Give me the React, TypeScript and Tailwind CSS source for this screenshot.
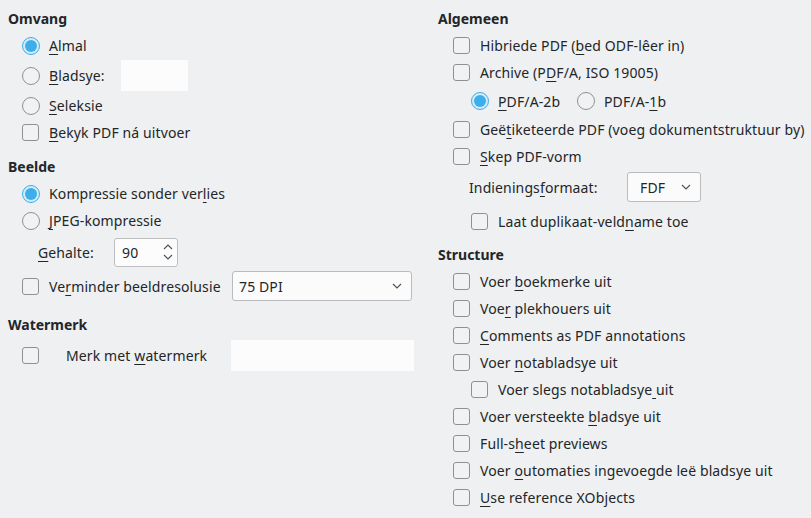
import React from "react";

const M = ({ t, i }: { t: string; i?: number }) => {
  if (i === undefined || i < 0) return <>{t}</>;
  return (
    <>
      {t.slice(0, i)}
      <span className="underline decoration-1 underline-offset-[3px]">{t[i]}</span>
      {t.slice(i + 1)}
    </>
  );
};

const Check = () => (
  <span className="block w-[17px] h-[17px] rounded-[3px] border border-[#8e9194] bg-[#f1f2f3]" />
);

const Radio = ({ on }: { on?: boolean }) =>
  on ? (
    <span className="flex items-center justify-center w-[18px] h-[18px] rounded-full border border-[#3daee9] bg-[#d4ebf8]">
      <span className="block w-[12px] h-[12px] rounded-full bg-[#3daee9]" />
    </span>
  ) : (
    <span className="block w-[18px] h-[18px] rounded-full border border-[#8e9194] bg-[#f1f2f3]" />
  );

const Row = ({
  children,
  h = 27,
  ml = 0,
}: {
  children: React.ReactNode;
  h?: number;
  ml?: number;
}) => (
  <div className="flex items-center whitespace-nowrap" style={{ height: h, marginLeft: ml }}>
    {children}
  </div>
);

const Ind = ({ children }: { children: React.ReactNode }) => (
  <span className="flex w-[27px] shrink-0 items-center">{children}</span>
);

const Header = ({ children }: { children: React.ReactNode }) => (
  <div className="flex h-[27px] items-center font-bold tracking-normal">{children}</div>
);

const ChevDown = () => (
  <svg width="10" height="6" viewBox="0 0 10 6" fill="none">
    <path d="M1 1l4 4 4-4" stroke="#4d4f52" strokeWidth="1.1" />
  </svg>
);

const ChevUp = () => (
  <svg width="10" height="6" viewBox="0 0 10 6" fill="none">
    <path d="M1 5l4-4 4 4" stroke="#4d4f52" strokeWidth="1.1" />
  </svg>
);

const CB = ({ t, i, ml = 0 }: { t: string; i?: number; ml?: number }) => (
  <Row ml={ml}>
    <Ind>
      <Check />
    </Ind>
    <span>
      <M t={t} i={i} />
    </span>
  </Row>
);

export default function App() {
  return (
    <div
      className="w-[811px] h-[518px] bg-[#eff0f1] text-[#232629] text-[14px] tracking-[0.12px] flex overflow-hidden"
      style={{ fontFamily: '"Noto Sans", "Open Sans", sans-serif' }}
    >
      {/* Left column */}
      <div className="w-[430px] pl-[8px] pt-[5px] flex flex-col">
        <Header>Omvang</Header>
        <Row ml={14}>
          <Ind>
            <Radio on />
          </Ind>
          <span>
            <M t="Almal" i={0} />
          </span>
        </Row>
        <Row ml={14} h={33}>
          <Ind>
            <Radio />
          </Ind>
          <span className="w-[72px] shrink-0">
            <M t="Bladsye:" i={0} />
          </span>
          <span className="block w-[67px] h-[31px] bg-[#fcfcfc]" />
        </Row>
        <Row ml={14}>
          <Ind>
            <Radio />
          </Ind>
          <span>
            <M t="Seleksie" i={0} />
          </span>
        </Row>
        <CB ml={14} t="Bekyk PDF ná uitvoer" i={0} />

        <div className="mt-[7px]">
          <Header>Beelde</Header>
        </div>
        <Row ml={14}>
          <Ind>
            <Radio on />
          </Ind>
          <span>
            <M t="Kompressie sonder verlies" i={21} />
          </span>
        </Row>
        <Row ml={14}>
          <Ind>
            <Radio />
          </Ind>
          <span>
            <M t="JPEG-kompressie" i={0} />
          </span>
        </Row>
        <Row ml={30} h={36}>
          <span className="w-[76px] shrink-0">
            <M t="Gehalte:" i={0} />
          </span>
          <span className="flex items-center w-[64px] h-[29px] rounded-[3px] border border-[#bcbec0] bg-[#fcfcfc] pl-[7px] pr-[4px]">
            <span className="flex-1">90</span>
            <span className="flex flex-col gap-[4px]">
              <ChevUp />
              <ChevDown />
            </span>
          </span>
        </Row>
        <Row ml={14} h={32}>
          <Ind>
            <Check />
          </Ind>
          <span className="w-[183px] shrink-0">
            <M t="Verminder beeldresolusie" i={2} />
          </span>
          <span className="flex items-center w-[180px] h-[30px] rounded-[3px] border border-[#b9bbbe] bg-[#fbfbfb] pl-[6px] pr-[9px]">
            <span className="flex-1">75 DPI</span>
            <ChevDown />
          </span>
        </Row>

        <div className="mt-[9px]">
          <Header>Watermerk</Header>
        </div>
        <Row ml={14} h={35}>
          <Ind>
            <Check />
          </Ind>
          <span className="w-[182px] shrink-0 pl-[17px]">
            <M t="Merk met watermerk" i={9} />
          </span>
          <span className="block w-[183px] h-[31px] bg-[#fcfcfc]" />
        </Row>
      </div>

      {/* Right column */}
      <div className="flex-1 pl-[8px] pt-[5px] flex flex-col">
        <Header>Algemeen</Header>
        <CB ml={15} t="Hibriede PDF (bed ODF-lêer in)" i={14} />
        <CB ml={15} t="Archive (PDF/A, ISO 19005)" i={10} />
        <Row ml={33} h={30}>
          <Ind>
            <Radio on />
          </Ind>
          <span className="w-[79px] shrink-0">
            <M t="PDF/A-2b" i={0} />
          </span>
          <Ind>
            <Radio />
          </Ind>
          <span>
            <M t="PDF/A-1b" i={6} />
          </span>
        </Row>
        <CB ml={15} t="Geëtiketeerde PDF (voeg dokumentstruktuur by)" i={3} />
        <CB ml={15} t="Skep PDF-vorm" i={0} />
        <Row ml={31} h={34}>
          <span className="w-[158px] shrink-0">
            <M t="Indieningsformaat:" i={10} />
          </span>
          <span className="flex items-center w-[74px] h-[30px] rounded-[3px] border border-[#b9bbbe] bg-[#fbfbfb] pl-[12px] pr-[9px]">
            <span className="flex-1">FDF</span>
            <ChevDown />
          </span>
        </Row>
        <Row ml={33} h={34}>
          <Ind>
            <Check />
          </Ind>
          <span>
            <M t="Laat duplikaat-veldname toe" i={19} />
          </span>
        </Row>

        <div className="mt-[3px]">
          <Header>Structure</Header>
        </div>
        <CB ml={15} t="Voer boekmerke uit" i={5} />
        <CB ml={15} t="Voer plekhouers uit" i={3} />
        <CB ml={15} t="Comments as PDF annotations" i={0} />
        <CB ml={15} t="Voer notabladsye uit" i={5} />
        <CB ml={33} t="Voer slegs notabladsye uit" i={22} />
        <CB ml={15} t="Voer versteekte bladsye uit" i={16} />
        <CB ml={15} t="Full-sheet previews" i={6} />
        <CB ml={15} t="Voer outomaties ingevoegde leë bladsye uit" i={5} />
        <CB ml={15} t="Use reference XObjects" i={0} />
      </div>
    </div>
  );
}
